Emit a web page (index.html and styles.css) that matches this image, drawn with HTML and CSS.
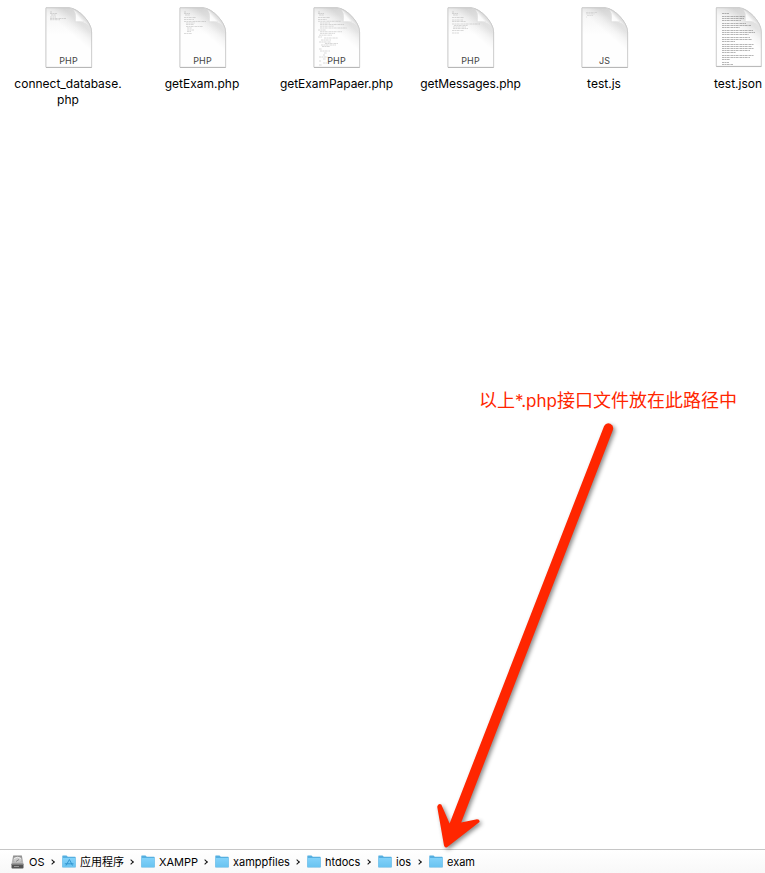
FILE: index.html
```html
<!DOCTYPE html>
<html lang="zh-CN">
<head>
<meta charset="utf-8">
<title>exam</title>
<link rel="stylesheet" href="styles.css">
</head>
<body>
<svg class="defs" width="0" height="0" aria-hidden="true">
  <defs>
    <linearGradient id="sheet" x1="0" y1="0" x2="0" y2="1">
      <stop offset="0" stop-color="#ececec"/><stop offset=".15" stop-color="#f7f7f7"/><stop offset=".45" stop-color="#fefefe"/>
    </linearGradient>
    <linearGradient id="shade" gradientUnits="userSpaceOnUse" x1="38" y1="11" x2="25" y2="26">
      <stop offset=".3" stop-color="#000" stop-opacity=".1"/><stop offset=".65" stop-color="#000" stop-opacity=".035"/><stop offset="1" stop-color="#000" stop-opacity="0"/>
    </linearGradient>
    <linearGradient id="fold" gradientUnits="userSpaceOnUse" x1="33" y1="16" x2="39.5" y2="10">
      <stop offset="0" stop-color="#fff"/><stop offset=".5" stop-color="#fafafa"/><stop offset="1" stop-color="#d2d2d2"/>
    </linearGradient>
    <linearGradient id="blue" x1="0" y1="0" x2="0" y2="1">
      <stop offset="0" stop-color="#82d2fa"/><stop offset="1" stop-color="#69c3f0"/>
    </linearGradient>
    <linearGradient id="metal" x1="0" y1="0" x2="0" y2="1">
      <stop offset="0" stop-color="#8a8a8a"/><stop offset="1" stop-color="#c4c4c4"/>
    </linearGradient>
  </defs>
  <symbol id="doc" viewBox="0 0 52 66">
    <path d="M3 2.8H26C35 3 48.6 17 48.6 27V62.3H3Z" fill="url(#sheet)"/>
    <path d="M3 2.8H26C35 3 48.6 17 48.6 27V62.3H3Z" fill="url(#shade)" stroke="#c8c8c8" stroke-width=".8"/>
    <path d="M3 62.5H48.6" stroke="#adadad" stroke-width=".7"/>
    <path d="M26.5 3C33 4 33 10 32.5 16.5C39 16.3 46 17 48.5 26C46 18 35 5 26.5 3Z" fill="url(#fold)"/>
    <path d="M32.4 8L32.2 16.8L41 16.6" fill="none" stroke="#ddd" stroke-width=".5"/>
  </symbol>
  <symbol id="folder" viewBox="0 0 14 13">
    <path d="M.3 1Q.3.5.8.5H4.5L5.8 1.7H13Q13.7 1.7 13.7 2.3V12Q13.7 12.5 13.2 12.5H.8Q.3 12.5.3 12Z" fill="#55afe0"/>
    <path d="M.6 3H13.4V12H.6Z" fill="url(#blue)"/>
  </symbol>
</svg>

<main class="files">
  <figure class="file">
    <div class="thumb"><svg><use href="#doc"/><path class="code" d="M7 7h2M7 8.5h7M8 10h5M7 12h6M7 13.5h16M7 14.7h10"/></svg><span class="kind">PHP</span></div>
    <figcaption>connect_database.<br>php</figcaption>
  </figure>
  <figure class="file">
    <div class="thumb"><svg><use href="#doc"/><path class="code" d="M7 7h2M7 8.5h6M8 10h5M7 12.5h12M7 14.5h10M7 16.5h22M9 18h9M9 19.5h8M9 21.5h17M10 23h5M10 25h7M10 26.5h4M7 28.5h8"/></svg><span class="kind">PHP</span></div>
    <figcaption>getExam.php</figcaption>
  </figure>
  <figure class="file">
    <div class="thumb"><svg><use href="#doc"/><path class="code" d="M7 7h2M7 8.5h6M8 10h5M7 12.5h12M7 14.5h9M7 16.3h23M9 18h10M9 19.5h24M9 21.2h14M9 23h27M7 25h8M9 26.7h22M9 28.4h15M8 30.2h13M7 32h4M13 33h14M10 35h10M8 37h12M14 38.5h13M10 40h15M11 41.5h8M8 44h3M9 46h10M13 48h3M12 50h2M8 52h9M12 54h3M8 56h2M12 58h4M8 60h3"/></svg><span class="kind">PHP</span></div>
    <figcaption class="long">getExamPapaer.php</figcaption>
  </figure>
  <figure class="file">
    <div class="thumb"><svg><use href="#doc"/><path class="code" d="M7 7h2M7 8.5h6M8 10h5M7 12.5h12M7 15h11M7 16.5h14M7 19h28M9 20.5h14M8 22h13M8 23.5h15M7 25.5h12M7 28h7"/></svg><span class="kind">PHP</span></div>
    <figcaption class="long">getMessages.php</figcaption>
  </figure>
  <figure class="file">
    <div class="thumb"><svg><use href="#doc"/><path class="code faint" d="M7 7.5h11M7 8.8h9M8 10.5h6M7 12h1"/></svg><span class="kind">JS</span></div>
    <figcaption>test.js</figcaption>
  </figure>
  <figure class="file">
    <div class="thumb text"><svg><use href="#doc"/><path class="prose" d="M9 8.5h7M9 11.5h23M9 13.5h22M9 15.5h19M9 18.5h24M9 20.5h29M9 22.5h18M9 25.5h31M9 27.5h33M9 29.5h27M9 32.5h28M9 34.5h30M9 36.5h13M9 39.5h32M9 41.5h30M9 43.5h32M9 45.5h28M9 47.5h14M9 50.5h32M9 52.5h28M9 54.5h8M9 57.5h7M9 59.5h11"/></svg></div>
    <figcaption>test.json</figcaption>
  </figure>
</main>

<p class="note">以上<span>*.php</span>接口文件放在此路径中</p>
<svg class="arrow" width="765" height="873" viewBox="0 0 765 873" aria-hidden="true">
  <path d="M604.1 425.9Q606.2 422.4 610.3 423.7Q614.2 425.6 612.9 430L461.2 822.5L477 819.2Q480 819.3 479.5 822L447 847.2Q445 848.4 444 845.5L437.2 806.7Q438 803 441.3 804.4L449.6 823.4Z"/>
</svg>

<nav class="path">
  <span class="crumb"><svg class="disk" viewBox="0 0 13 14"><path d="M2.2.5H10.8L12.5 9H.5Z" fill="url(#metal)"/><ellipse cx="6.5" cy="4.6" rx="4" ry="2.6" fill="#c9c9c9"/><path d="M3 3.5Q6.5 1 10 3.5" stroke="#eee" fill="none"/><path d="M5 6.5L8 4.5" stroke="#888"/><rect x=".5" y="8.5" width="12" height="5" rx=".8" fill="#555"/><path d="M1 9H12" stroke="#aaa"/><path d="M3 11.5H8" stroke="#999"/></svg><b class="p1">OS</b></span><i></i>
  <span class="crumb"><svg class="folder" viewBox="0 0 14 13"><use href="#folder"/><path d="M4 10.5L7.4 4.5L10.5 10.5M2.8 8.8H11.5" fill="none" stroke="#3396d0" stroke-width="1"/></svg><b class="p2">应用程序</b></span><i></i>
  <span class="crumb"><svg class="folder"><use href="#folder"/></svg><b class="p3">XAMPP</b></span><i></i>
  <span class="crumb"><svg class="folder"><use href="#folder"/></svg><b class="p4">xamppfiles</b></span><i></i>
  <span class="crumb"><svg class="folder"><use href="#folder"/></svg><b class="p5">htdocs</b></span><i></i>
  <span class="crumb"><svg class="folder"><use href="#folder"/></svg><b class="p6">ios</b></span><i></i>
  <span class="crumb"><svg class="folder"><use href="#folder"/></svg><b class="p7">exam</b></span>
</nav>
</body>
</html>
```
FILE: styles.css
```css
* { box-sizing: border-box; }
body {
  margin: 0;
  width: 765px;
  height: 873px;
  display: flex;
  flex-direction: column;
  overflow: hidden;
  background: #fff;
  color: #000;
  font-family: Inter, "Noto Sans CJK SC", sans-serif;
}
.defs { position: absolute; }
.files {
  display: grid;
  grid-template-columns: repeat(5, 134px) 95px;
  padding-top: 5px;
  height: 390px;
  flex: none;
}
.file {
  margin: 0;
  display: flex;
  flex-direction: column;
  align-items: center;
}
.file:last-child {
  align-items: flex-start;
  padding-left: 43px;
}
.thumb {
  display: grid;
  width: 52px;
  height: 66px;
  margin-left: 3px;
}
.file:last-child .thumb { margin-left: 0; }
.thumb > * { grid-area: 1 / 1; }
.thumb svg {
  width: 52px;
  height: 66px;
  filter: drop-shadow(0 .5px .7px rgba(0, 0, 0, .2));
}
.thumb.text svg { height: 65px; }
.kind {
  align-self: end;
  justify-self: center;
  margin-bottom: 5px;
  z-index: 1;
  font-size: 9px;
  line-height: 11px;
  letter-spacing: .1px;
  color: #444;
}
.code, .prose {
  fill: none;
  stroke: #999;
  stroke-width: .6;
  stroke-dasharray: 2.5 .4 1.2 .4;
  opacity: .6;
}
.faint { opacity: .4; }
.prose { stroke: #777; stroke-width: .9; }
figcaption {
  margin: 5px 0 0 2px;
  width: max-content;
  font-size: 12px;
  line-height: 16px;
  text-align: center;
  white-space: nowrap;
}
.long { margin-left: 3px; letter-spacing: -.05px; }
.file:last-child figcaption { margin-left: 1px; }
.note {
  margin: -3px 0 0 479px;
  flex: none;
  height: 28px;
  line-height: 28px;
  font-size: 18px;
  white-space: nowrap;
  color: #ff2600;
}
.note span { font-size: 17px; }
.arrow {
  position: absolute;
  left: 0;
  top: 0;
  fill: #ff2600;
  filter: drop-shadow(2px 2px 2px rgba(0, 0, 0, .45));
}
.path {
  flex: none;
  height: 24px;
  margin-top: auto;
  display: flex;
  align-items: center;
  padding-left: 11px;
  border-top: 1px solid #c6c6c6;
  background: linear-gradient(#fff, #f8f8f8);
  font-size: 11px;
  line-height: 16px;
}
.crumb { display: flex; align-items: center; gap: 4px; }
.crumb b { font-weight: 400; white-space: nowrap; }
.disk { width: 13px; height: 14px; margin-right: 1px; }
.folder { width: 14px; height: 13px; }
.path i {
  width: 4px;
  height: 4px;
  margin: 0 8px 0 5px;
  border: solid #111;
  border-width: 1.6px 1.6px 0 0;
  transform: rotate(45deg);
}
.p1 { width: 16px; }
.p2 { width: 44px; }
.p3 { width: 39px; }
.p4 { width: 57px; }
.p5 { width: 36px; }
.p6 { width: 16px; }
.p7 { width: 28px; }
```
